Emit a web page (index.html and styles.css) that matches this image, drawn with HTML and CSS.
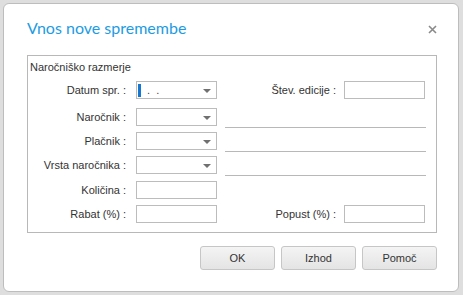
FILE: index.html
```html
<!DOCTYPE html>
<html lang="sl">
  <head>
    <meta charset="UTF-8" />
    <title>Vnos nove spremembe</title>
    <link rel="stylesheet" href="styles.css">
  </head>
  <body>
    <div class="dialog">
      <div class="dialog-header">
        <h2 class="dialog-title">Vnos nove spremembe</h2>
        <span class="close">
          <svg width="9" height="9" viewBox="0 0 9 9">
            <path d="M1 1 L8 8 M8 1 L1 8" stroke="#8a8a8a" stroke-width="1.6" />
          </svg>
        </span>
      </div>

      <div class="group">
        <div class="group-title">Naročniško razmerje</div>

        <div class="row row-first">
          <label class="lbl">Datum spr. :</label>
          <div class="combo">
            <span class="combo-text"><span class="caret"></span>. &nbsp;.</span>
            <span class="arrow"></span>
          </div>
          <div class="right">
            <label class="lbl">Štev. edicije :</label>
            <div class="field"></div>
          </div>
        </div>

        <div class="row">
          <label class="lbl">Naročnik :</label>
          <div class="combo"><span class="arrow"></span></div>
          <div class="right"><div class="line"></div></div>
        </div>

        <div class="row">
          <label class="lbl">Plačnik :</label>
          <div class="combo"><span class="arrow"></span></div>
          <div class="right"><div class="line"></div></div>
        </div>

        <div class="row row-gap">
          <label class="lbl">Vrsta naročnika :</label>
          <div class="combo"><span class="arrow"></span></div>
          <div class="right"><div class="line"></div></div>
        </div>

        <div class="row">
          <label class="lbl">Količina :</label>
          <div class="field"></div>
          <div class="right"></div>
        </div>

        <div class="row">
          <label class="lbl">Rabat (%) :</label>
          <div class="field"></div>
          <div class="right">
            <label class="lbl">Popust (%) :</label>
            <div class="field"></div>
          </div>
        </div>
      </div>

      <div class="buttons">
        <button>OK</button>
        <button>Izhod</button>
        <button>Pomoč</button>
      </div>
    </div>
  </body>
</html>
```

FILE: styles.css
```css
* {
  box-sizing: border-box;
  margin: 0;
  padding: 0;
}

body {
  background-color: #dedede;
  padding: 3px 4px 3px 3px;
  height: 295px;
  font-family: "Liberation Sans", Arial, sans-serif;
  font-size: 11px;
  color: #333333;
}

.dialog {
  background-color: #ffffff;
  border: 1px solid #bdbdbd;
  border-radius: 6px;
  height: 289px;
  padding: 0 21px 0 23px;
  display: flex;
  flex-direction: column;
}

.dialog-header {
  display: flex;
  justify-content: space-between;
  padding: 13px 0 0 0;
  height: 51px;
  align-items: flex-start;
}

.dialog-title {
  font-family: Lato, "Noto Sans", sans-serif;
  font-weight: normal;
  font-size: 16px;
  line-height: 22px;
  color: #1e9be3;
}

.close {
  margin-top: 8px;
  line-height: 0;
}

/* Group box */
.group {
  border: 1px solid #b8b8b8;
  height: 178px;
  padding: 4px 0 0 2px;
}

.group-title {
  line-height: 14px;
  margin-bottom: 7px;
}

.row {
  display: flex;
  align-items: center;
  height: 18px;
  margin-bottom: 6px;
}

.row-first {
  margin-bottom: 9px;
}

.row-gap {
  margin-bottom: 7px;
}

.lbl {
  width: 106px;
  text-align: right;
  padding-right: 10px;
  white-space: nowrap;
}

.combo,
.field {
  width: 81px;
  height: 18px;
  border: 1px solid #bcbcbc;
  background-color: #ffffff;
  position: relative;
  flex-shrink: 0;
}

.combo-text {
  display: flex;
  align-items: center;
  height: 16px;
  padding-left: 1px;
  color: #444444;
}

.caret {
  display: inline-block;
  width: 3px;
  height: 13px;
  background-color: #1677d2;
  margin-right: 6px;
}

.arrow {
  position: absolute;
  right: 5px;
  top: 7px;
  border-left: 4px solid transparent;
  border-right: 4px solid transparent;
  border-top: 4px solid #707070;
}

.right {
  width: 201px;
  margin-left: 8px;
  height: 18px;
  display: flex;
  justify-content: flex-end;
  align-items: center;
  padding-right: 1px;
}

.right .lbl {
  width: auto;
  padding-right: 8px;
}

.line {
  width: 201px;
  height: 1px;
  background-color: #b8b8b8;
  align-self: flex-end;
  margin-bottom: -2px;
  margin-right: -1px;
}

/* Buttons */
.buttons {
  display: flex;
  justify-content: flex-end;
  gap: 6px;
  margin-top: 13px;
}

.buttons button {
  width: 75px;
  height: 24px;
  border: 1px solid #c6c6c6;
  border-radius: 3px;
  background: linear-gradient(#f4f4f4, #e4e4e4);
  font-family: "Liberation Sans", Arial, sans-serif;
  font-size: 11px;
  color: #333333;
  cursor: pointer;
}
```
